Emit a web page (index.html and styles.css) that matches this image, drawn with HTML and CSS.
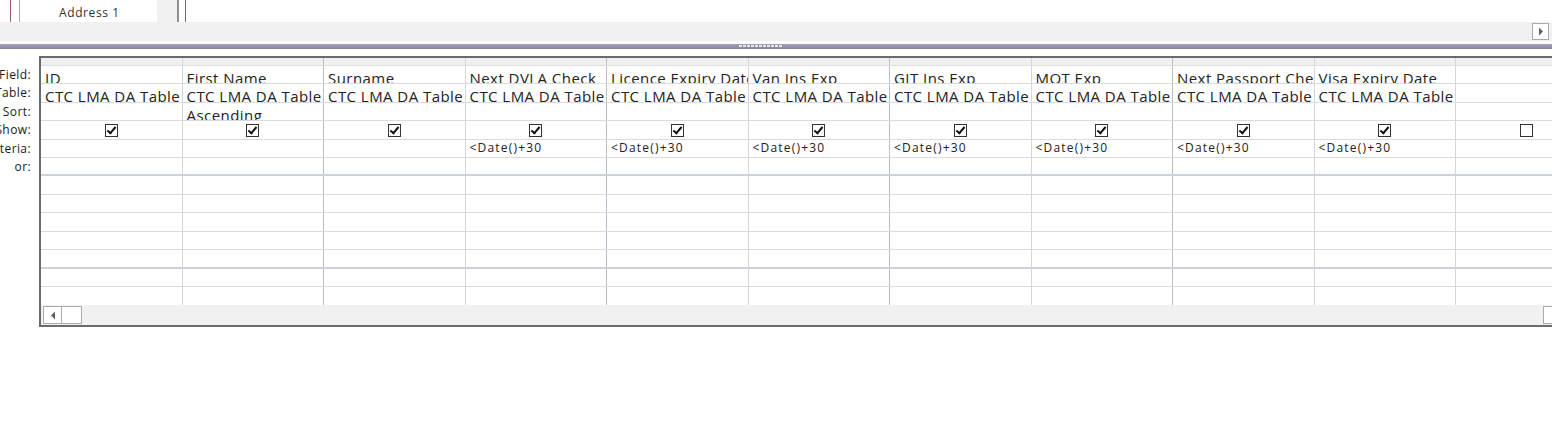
FILE: index.html
```html
<!DOCTYPE html>
<html>
<head>
<meta charset="utf-8">
<link rel="stylesheet" href="styles.css">
</head>
<body>
<div class="page">
  <div class="fieldlist">
    <div class="fl-space"></div>
    <div class="fl-line red"></div>
    <div class="fl-gap"></div>
    <div class="fl-line gray"></div>
    <div class="fl-box"><span class="fl-item">Address 1</span></div>
    <div class="fl-track"></div>
    <div class="fl-edge"></div>
    <div class="fl-gap2"></div>
    <div class="fl-line red"></div>
  </div>
  <div class="topscroll">
    <div class="sbtn"><svg width="6" height="9" viewBox="0 0 6 9"><path d="M1 0.5 L5 4.5 L1 8.5 Z" fill="#606060"/></svg></div>
  </div>
  <div class="gap3"></div>
  <div class="splitter"><div class="grip"></div></div>
  <div class="gap7"></div>

  <div class="design">
    <div class="labels">
      <div class="lrow hdr"></div>
      <div class="lrow h18"><span>Field:</span></div>
      <div class="lrow h19"><span>Table:</span></div>
      <div class="lrow h18"><span>Sort:</span></div>
      <div class="lrow h19"><span>Show:</span></div>
      <div class="lrow h18"><span>Criteria:</span></div>
      <div class="lrow h18"><span>or:</span></div>
    </div>
    <div class="grid">
      <div class="row hdr">
        <div class="c"></div><div class="c d"></div><div class="c"></div><div class="c d"></div><div class="c"></div><div class="c d"></div><div class="c"></div><div class="c d"></div><div class="c"></div><div class="c"></div><div class="c"></div>
      </div>
      <div class="row h18">
        <div class="c t">ID</div><div class="c d t">First Name</div><div class="c t">Surname</div><div class="c d t">Next DVLA Check</div><div class="c t">Licence Expiry Date</div><div class="c d t">Van Ins Exp</div><div class="c t">GIT Ins Exp</div><div class="c d t">MOT Exp</div><div class="c t">Next Passport Check</div><div class="c t">Visa Expiry Date</div><div class="c t"></div>
      </div>
      <div class="row h19">
        <div class="c t">CTC LMA DA Table</div><div class="c d t">CTC LMA DA Table</div><div class="c t">CTC LMA DA Table</div><div class="c d t">CTC LMA DA Table</div><div class="c t">CTC LMA DA Table</div><div class="c d t">CTC LMA DA Table</div><div class="c t">CTC LMA DA Table</div><div class="c d t">CTC LMA DA Table</div><div class="c t">CTC LMA DA Table</div><div class="c t">CTC LMA DA Table</div><div class="c t"></div>
      </div>
      <div class="row h18">
        <div class="c t"></div><div class="c d t">Ascending</div><div class="c t"></div><div class="c d t"></div><div class="c t"></div><div class="c d t"></div><div class="c t"></div><div class="c d t"></div><div class="c t"></div><div class="c t"></div><div class="c t"></div>
      </div>
      <div class="row h19">
        <div class="c k"><span class="cb on"></span></div><div class="c d k"><span class="cb on"></span></div><div class="c k"><span class="cb on"></span></div><div class="c d k"><span class="cb on"></span></div><div class="c k"><span class="cb on"></span></div><div class="c d k"><span class="cb on"></span></div><div class="c k"><span class="cb on"></span></div><div class="c d k"><span class="cb on"></span></div><div class="c k"><span class="cb on"></span></div><div class="c k"><span class="cb on"></span></div><div class="c k"><span class="cb"></span></div>
      </div>
      <div class="row h18">
        <div class="c q"></div><div class="c d q"></div><div class="c q"></div><div class="c d q">&lt;Date()+30</div><div class="c q">&lt;Date()+30</div><div class="c d q">&lt;Date()+30</div><div class="c q">&lt;Date()+30</div><div class="c d q">&lt;Date()+30</div><div class="c q">&lt;Date()+30</div><div class="c q">&lt;Date()+30</div><div class="c q"></div>
      </div>
      <div class="row h18 thick">
        <div class="c"></div><div class="c d"></div><div class="c"></div><div class="c d"></div><div class="c"></div><div class="c d"></div><div class="c"></div><div class="c d"></div><div class="c"></div><div class="c"></div><div class="c"></div>
      </div>
      <div class="row h19">
        <div class="c"></div><div class="c d"></div><div class="c"></div><div class="c d"></div><div class="c"></div><div class="c d"></div><div class="c"></div><div class="c d"></div><div class="c"></div><div class="c"></div><div class="c"></div>
      </div>
      <div class="row h18">
        <div class="c"></div><div class="c d"></div><div class="c"></div><div class="c d"></div><div class="c"></div><div class="c d"></div><div class="c"></div><div class="c d"></div><div class="c"></div><div class="c"></div><div class="c"></div>
      </div>
      <div class="row h19">
        <div class="c"></div><div class="c d"></div><div class="c"></div><div class="c d"></div><div class="c"></div><div class="c d"></div><div class="c"></div><div class="c d"></div><div class="c"></div><div class="c"></div><div class="c"></div>
      </div>
      <div class="row h18">
        <div class="c"></div><div class="c d"></div><div class="c"></div><div class="c d"></div><div class="c"></div><div class="c d"></div><div class="c"></div><div class="c d"></div><div class="c"></div><div class="c"></div><div class="c"></div>
      </div>
      <div class="row h19 thick">
        <div class="c"></div><div class="c d"></div><div class="c"></div><div class="c d"></div><div class="c"></div><div class="c d"></div><div class="c"></div><div class="c d"></div><div class="c"></div><div class="c"></div><div class="c"></div>
      </div>
      <div class="row h18">
        <div class="c"></div><div class="c d"></div><div class="c"></div><div class="c d"></div><div class="c"></div><div class="c d"></div><div class="c"></div><div class="c d"></div><div class="c"></div><div class="c"></div><div class="c"></div>
      </div>
      <div class="row h18 last">
        <div class="c"></div><div class="c d"></div><div class="c"></div><div class="c d"></div><div class="c"></div><div class="c d"></div><div class="c"></div><div class="c d"></div><div class="c"></div><div class="c"></div><div class="c"></div>
      </div>
      <div class="hscroll">
        <div class="hbtn"><svg width="6" height="9" viewBox="0 0 6 9"><path d="M5 0.5 L1 4.5 L5 8.5 Z" fill="#606060"/></svg></div>
        <div class="thumb"></div>
        <div class="hspace"></div>
        <div class="hbtn right"></div>
      </div>
    </div>
  </div>
</div>
</body>
</html>
```

FILE: styles.css
```css
html, body {
  margin: 0;
  padding: 0;
  background: #ffffff;
}
body {
  width: 1552px;
  height: 427px;
  overflow: hidden;
  font-family: "Open Sans", "Noto Sans", "DejaVu Sans", sans-serif;
  color: #222222;
}
.page {
  width: 1552px;
}

/* field list strip */
.fieldlist {
  display: flex;
  height: 22px;
  background: #ffffff;
}
.fl-space { width: 10px; }
.fl-line { width: 1px; }
.fl-line.red { background: #9a5a5e; }
.fl-line.gray { background: #b0b0b0; }
.fl-gap { width: 8px; }
.fl-box {
  width: 137px;
  padding-left: 39px;
  box-sizing: border-box;
  font-size: 12px;
  letter-spacing: 0.6px;
  line-height: 22px;
  color: #333;
  white-space: nowrap;
  overflow: hidden;
}
.fl-item { position: relative; top: 2px; }
.fl-track { width: 20px; background: #f1f1f1; }
.fl-edge { width: 2px; background: #8f8f8f; }
.fl-gap2 { width: 6px; }

.topscroll {
  height: 19px;
  background: #f1f1f1;
  display: flex;
  justify-content: flex-end;
  align-items: center;
  padding-right: 3px;
}
.sbtn {
  width: 15px;
  height: 15px;
  background: #ffffff;
  border: 1px solid #a9a9a9;
  display: flex;
  align-items: center;
  justify-content: center;
}
.gap3 { height: 3px; }
.gap7 { height: 7px; }
.splitter {
  height: 5px;
  background: linear-gradient(#a6a3bc, #86839f);
  display: flex;
  justify-content: center;
}
.grip {
  margin-left: -30px;
  width: 44px;
  height: 2px;
  margin-top: 1px;
  background: repeating-linear-gradient(90deg, #e8e8f0 0 3px, #8a879f 3px 4px);
}

/* design grid */
.design {
  display: flex;
}
.labels {
  width: 39px;
  flex: none;
  padding-top: 2px;
}
.lrow {
  display: flex;
  justify-content: flex-end;
  align-items: center;
  padding-right: 8px;
  box-sizing: border-box;
  overflow: hidden;
  font-size: 12px;
  letter-spacing: 0.4px;
  color: #1a1a1a;
  white-space: nowrap;
}
.lrow span { position: relative; top: -1px; }
.grid {
  flex: none;
  border-top: 2px solid #6b6b6b;
  border-left: 2px solid #6b6b6b;
  border-bottom: 2px solid #6b6b6b;
}
.row {
  display: grid;
  grid-template-columns: repeat(11, 141.5px);
  box-sizing: border-box;
  border-bottom: 1px solid #d7dbe3;
}
.hdr { height: 8px; background: #f0f0f0; border-bottom: 1px solid #dedede; }
.h18 { height: 18px; }
.h19 { height: 19px; }
.row.thick { border-bottom: 2px solid #cdd1da; }
.row.last { border-bottom: none; }
.lrow.hdr { background: transparent; border: none; }

.c {
  border-right: 1px solid #d3d6de;
  overflow: hidden;
  white-space: nowrap;
  min-width: 0;
}
.c.d { border-right-color: #b9bdc8; }
.t {
  font-size: 15px;
  letter-spacing: 0.45px;
  line-height: 18px;
  padding-left: 4px;
  padding-top: 3px;
  color: #222;
}
.q {
  font-size: 12px;
  letter-spacing: 1.2px;
  line-height: 16px;
  padding-left: 4px;
  color: #222;
}
.k {
  display: flex;
  align-items: center;
  justify-content: center;
}
.cb {
  width: 11px;
  height: 11px;
  border: 1px solid #333;
  background: #fff;
  display: block;
  position: relative;
}
.cb.on::after {
  content: "";
  position: absolute;
  left: 3px;
  top: 0px;
  width: 3px;
  height: 7px;
  border-right: 2px solid #111;
  border-bottom: 2px solid #111;
  transform: rotate(40deg);
}

.hscroll {
  height: 20px;
  background: #f1f1f1;
  display: flex;
  align-items: center;
  padding-left: 2px;
  width: 1556px;
  box-sizing: border-box;
}
.hbtn {
  width: 17px;
  height: 16px;
  background: #fff;
  border: 1px solid #ababab;
  display: flex;
  align-items: center;
  justify-content: center;
}
.thumb {
  width: 19px;
  height: 16px;
  background: #fff;
  border: 1px solid #ababab;
  border-left: none;
}
.hspace { width: 1461px; }
```
